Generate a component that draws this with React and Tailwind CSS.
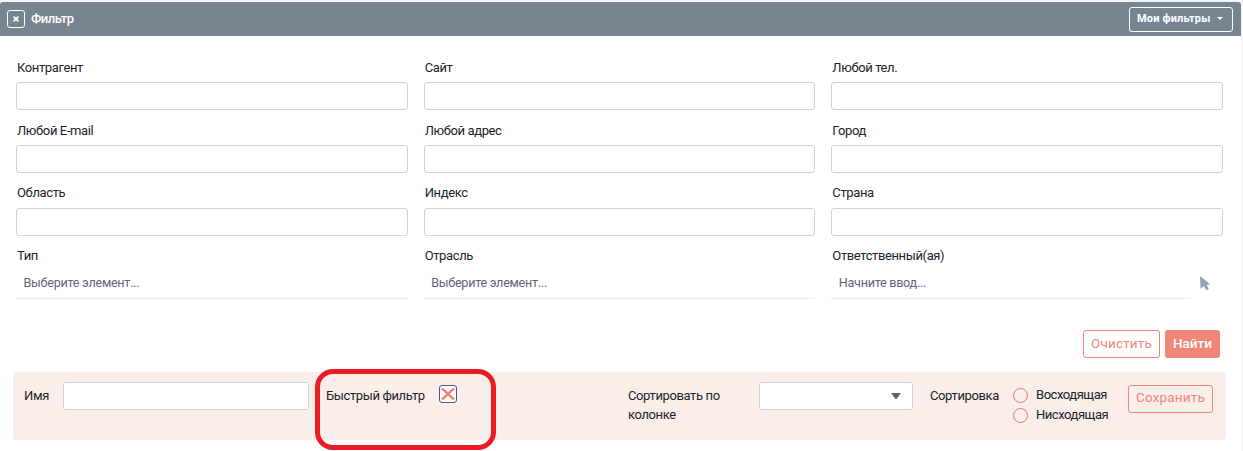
import React from "react";

const textFields = [
  ["Контрагент", "Сайт", "Любой тел."],
  ["Любой E-mail", "Любой адрес", "Город"],
];

const lowerTextFields = ["Область", "Индекс", "Страна"];

function TextField({ label, raised }) {
  return (
    <label className="block h-[63px]">
      <div className={raised ? "h-6 pl-px leading-[17px]" : "h-6 pl-px leading-[19px]"}>{label}</div>
      <input className="block h-7 w-full rounded-[3px] border border-[#ced2d9] bg-white px-2 outline-none" />
    </label>
  );
}

function Picker({ label, placeholder, cursor }) {
  return (
    <div>
      <div className="h-[22px] pl-px leading-[17px]">{label}</div>
      <div className="flex">
        <div className="h-[30px] flex-1 border-b border-[#ececee] pl-[7.5px] text-[12.6px] leading-[28px] tracking-[-0.27px] text-[#65617d]">
          {placeholder}
        </div>
        {cursor && (
          <div className="flex w-8 pt-[7px] pl-[9px]">
            <svg width="11" height="15" viewBox="0 0 11 15" fill="#94a3b3">
              <path d="M0 0L10.2 8.3L6.6 8.9L8.9 12.9L6.4 14.2L4 10L0.6 12.8Z" />
            </svg>
          </div>
        )}
      </div>
    </div>
  );
}

function Radio({ label }) {
  return (
    <div className="flex h-5 items-center">
      <span className="mr-2 size-[15px] rounded-full border border-[#ef7468]" />
      <span className="tracking-[-0.46px]">{label}</span>
    </div>
  );
}

export default function App() {
  return (
    <div className="h-[451px] w-[1243px] overflow-hidden bg-[#f5f5f6] pt-0.5 font-['Roboto',sans-serif] text-[13px] tracking-[-0.38px] text-[#212529]">
      <div className="h-[449px] w-[1241px] rounded-t-[3px] bg-white">
        <header className="flex h-[34px] items-center justify-between rounded-t-[3px] bg-[#788590] pr-2 pl-[7px] text-white">
          <div className="flex items-center">
            <button className="mr-1.5 flex size-[18px] items-center justify-center rounded-[3px] border border-white">
              <svg width="6" height="6" viewBox="0 0 6 6" stroke="white" strokeWidth="1.7">
                <path d="M.6 .6L5.4 5.4M5.4 .6L.6 5.4" />
              </svg>
            </button>
            <h1 className="text-[13px] leading-[18px] font-medium tracking-[-0.5px]">Фильтр</h1>
          </div>
          <button className="flex h-[25px] w-[104px] items-center rounded-[3px] border border-white pl-[7px] text-[11px] font-bold tracking-[0.16px] whitespace-nowrap">
            Мои фильтры
            <svg className="mb-0.5 ml-[7px]" width="6" height="3" viewBox="0 0 6 3" fill="white">
              <path d="M0 0H6L3 3Z" />
            </svg>
          </button>
        </header>

        <main className="pt-[22px] pr-[18px] pl-4">
          <div className="grid grid-cols-3 gap-x-4">
            {textFields.flat().map((label) => (
              <TextField key={label} label={label} />
            ))}
            {lowerTextFields.map((label) => (
              <TextField key={label} label={label} raised />
            ))}
            <Picker label="Тип" placeholder="Выберите элемент..." />
            <Picker label="Отрасль" placeholder="Выберите элемент..." />
            <Picker label="Ответственный(ая)" placeholder="Начните ввод..." cursor />
          </div>
        </main>

        <div className="mt-[31px] mr-[21px] flex h-7 justify-end gap-[5px] text-[13.5px] tracking-[0.2px]">
          <button className="w-[77px] rounded-[3px] border border-[#f08677] pb-px text-[#f08677]">Очистить</button>
          <button className="w-[55px] rounded-[3px] bg-[#f08677] pb-px font-medium tracking-[0.05px] text-white">Найти</button>
        </div>

        <section className="relative mt-3.5 ml-[13px] flex h-[68px] w-[1213px] items-start rounded-[4px] bg-[#f9eeea]">
          <span className="w-[50px] pt-3.5 pl-[11px] leading-[19px]">Имя</span>
          <input aria-label="Имя" className="mt-2.5 h-7 w-[246px] rounded-[3px] border border-[#ced2d9] bg-white px-2 outline-none" />
          <span className="ml-[17px] w-[113px] pt-3.5 leading-[19px]">Быстрый фильтр</span>
          <span className="mt-[13px] flex size-[18px] items-center justify-center rounded-[3px] border border-[#58556e] bg-white">
            <svg className="shrink-0" width="14" height="12" viewBox="0 0 14 12" stroke="#f08677" strokeWidth="2.4">
              <path d="M1 .5L13 11.5M13 .5L1 11.5" />
            </svg>
          </span>
          <span className="ml-[171px] w-[131px] pt-3.5 pr-6 leading-[19px]">Сортировать по колонке</span>
          <div className="mt-2.5 flex h-7 w-[154px] items-center justify-end rounded-[3px] border border-[#ced2d9] bg-white pr-[11px]">
            <svg width="10" height="6" viewBox="0 0 10 6" fill="#65617d">
              <path d="M0 0H10L5.5 6H4.5Z" />
            </svg>
          </div>
          <span className="ml-[17px] w-[83px] pt-3.5 leading-[19px]">Сортировка</span>
          <div className="w-[115px] pt-[13px]">
            <Radio label="Восходящая" />
            <Radio label="Нисходящая" />
          </div>
          <button className="mt-[13px] h-7 w-[85px] rounded-[3px] border border-[#f08677] pb-[3px] text-[13.5px] tracking-[0.2px] text-[#f08677]">
            Сохранить
          </button>
          <div className="pointer-events-none absolute top-[-3px] left-[302px] h-[81px] w-[181px] rounded-[18px] border-[5px] border-[#ed1c24]" />
        </section>
      </div>
    </div>
  );
}
